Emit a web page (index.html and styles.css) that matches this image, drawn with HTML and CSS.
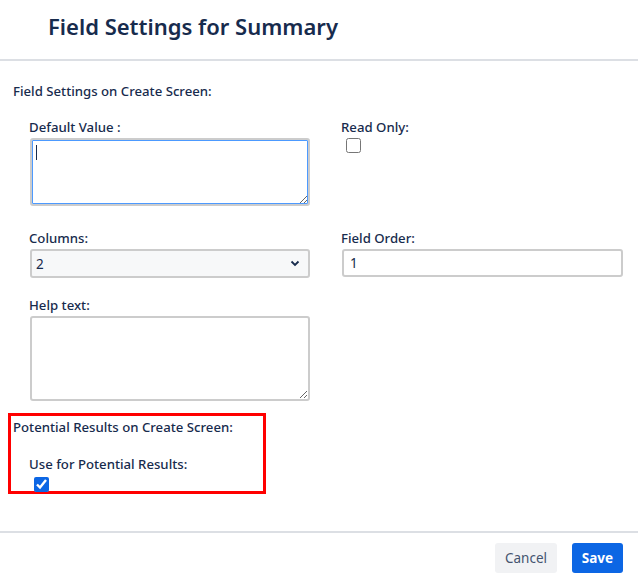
FILE: index.html
```html
<!doctype html>
<html lang="en">
    <head>
        <meta charset="UTF-8" />
        <title>Field Settings for Summary</title>
        <link rel="stylesheet" href="styles.css">
    </head>
    <body>
        <div class="modal">
            <div class="modal-header">
                <h1>Field Settings for Summary</h1>
            </div>

            <div class="modal-body">
                <div class="section-title">Field Settings on Create Screen:</div>

                <div class="grid">
                    <div class="field">
                        <label>Default Value :</label>
                        <div class="textarea-wrap">
                            <textarea class="focused"></textarea>
                            <span class="caret"></span>
                        </div>
                    </div>
                    <div class="field">
                        <label>Read Only:</label>
                        <input type="checkbox" class="check" />
                    </div>

                    <div class="field">
                        <label>Columns:</label>
                        <div class="select">
                            <span>2</span>
                            <svg width="10" height="7" viewBox="0 0 10 7">
                                <path d="M1.5 1.5 L5 5 L8.5 1.5" fill="none" stroke="#172b4d" stroke-width="1.8" />
                            </svg>
                        </div>
                    </div>
                    <div class="field">
                        <label>Field Order:</label>
                        <input type="text" class="text-input" value="1" />
                    </div>

                    <div class="field">
                        <label>Help text:</label>
                        <textarea class="tall"></textarea>
                    </div>
                </div>

                <div class="highlight">
                    <div class="section-title">Potential Results on Create Screen:</div>
                    <div class="field inner">
                        <label>Use for Potential Results:</label>
                        <input type="checkbox" class="check" checked />
                    </div>
                </div>
            </div>

            <div class="modal-footer">
                <button class="btn btn-subtle">Cancel</button>
                <button class="btn btn-primary">Save</button>
            </div>
        </div>
    </body>
</html>
```

FILE: styles.css
```css
body {
    margin: 0;
    font-family: "Noto Sans", "Open Sans", sans-serif;
    color: #172b4d;
    background: #fff;
}

.modal {
    width: 638px;
    height: 578px;
    display: flex;
    flex-direction: column;
}

.modal-header {
    height: 61px;
    border-bottom: 2px solid #dcdfe4;
    box-sizing: border-box;
    padding-left: 48px;
}

.modal-header h1 {
    margin: 0;
    padding-top: 10px;
    font-size: 22px;
    font-weight: 600;
    line-height: 32px;
}

.modal-body {
    flex: 1;
    padding: 21px 0 0 13px;
}

.section-title {
    font-size: 13.2px;
    font-weight: 500;
    line-height: 18px;
}

.grid {
    display: grid;
    grid-template-columns: 280px 281px;
    column-gap: 32px;
    padding: 18px 0 0 17px;
}

.field label {
    display: block;
    font-size: 13.2px;
    font-weight: 500;
    line-height: 18px;
    margin-left: -1px;
    margin-bottom: 2px;
}

.textarea-wrap {
    position: relative;
}

.caret {
    position: absolute;
    left: 6px;
    top: 7px;
    width: 1px;
    height: 15px;
    background: #172b4d;
}

textarea {
    display: block;
    box-sizing: border-box;
    width: 280px;
    height: 68px;
    border: 2px solid #ccc;
    border-radius: 3px;
    margin: 0 0 23px;
    font-family: inherit;
    resize: vertical;
}

textarea.focused {
    box-shadow: inset 0 0 0 1px #4c9aff;
}

textarea.tall {
    height: 85px;
    margin-bottom: 0;
}

.check {
    display: block;
    width: 15px;
    height: 15px;
    margin: 2px 0 0 4px;
    accent-color: #0c66e4;
}

.select {
    box-sizing: border-box;
    width: 280px;
    height: 29px;
    border: 2px solid #ccc;
    border-radius: 3px;
    background: #f7f8f9;
    display: flex;
    align-items: center;
    justify-content: space-between;
    padding: 0 8px 0 4px;
    font-size: 13.5px;
    margin-bottom: 18px;
}

.text-input {
    display: block;
    box-sizing: border-box;
    width: 281px;
    height: 28px;
    border: 2px solid #ccc;
    border-radius: 3px;
    padding: 0 6px;
    font-family: inherit;
    font-size: 13.5px;
    color: #172b4d;
}

.highlight {
    width: 258px;
    height: 81px;
    box-sizing: border-box;
    border: 3px solid #f00;
    margin: 12px 0 0 -5px;
    padding: 2px 0 0 2px;
}

.highlight .inner {
    padding: 19px 0 0 17px;
}

.highlight .check {
    margin-top: 4px;
}

.modal-footer {
    border-top: 2px solid #dcdfe4;
    height: 47px;
    box-sizing: border-box;
    display: flex;
    justify-content: flex-end;
    align-items: flex-start;
    gap: 15px;
    padding: 10px 15px 0 0;
}

.btn {
    border: none;
    border-radius: 3px;
    height: 30px;
    font-family: inherit;
    font-size: 13.5px;
}

.btn-subtle {
    background: #f1f2f4;
    color: #44546f;
    width: 62px;
}

.btn-primary {
    background: #0c66e4;
    color: #fff;
    font-weight: 700;
    width: 51px;
}
```
